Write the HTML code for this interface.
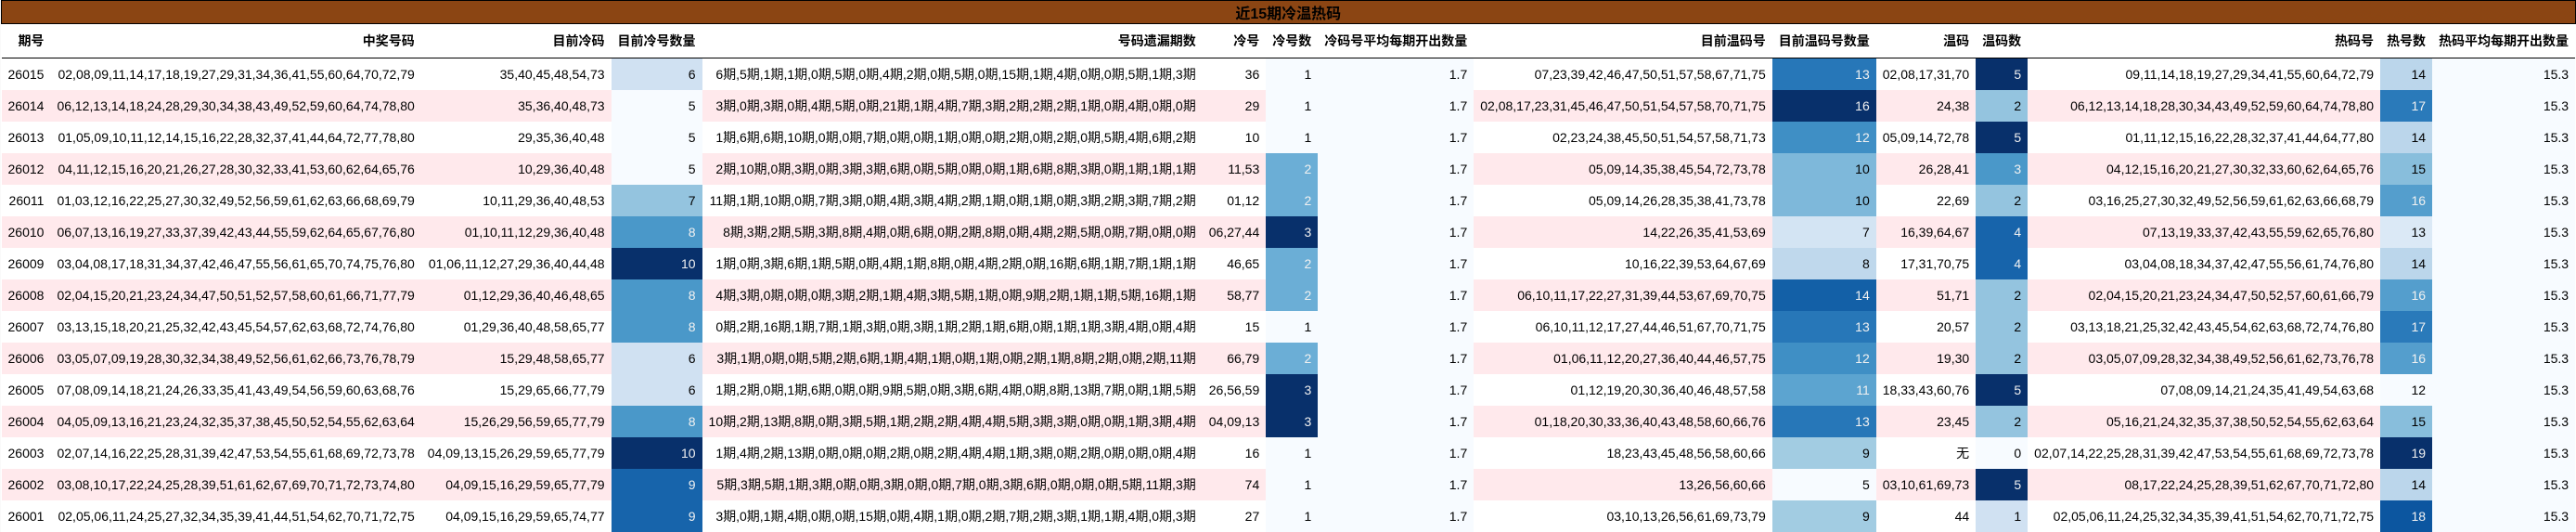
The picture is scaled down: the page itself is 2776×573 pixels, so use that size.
<!DOCTYPE html>
<html><head><meta charset="utf-8"><style>
html,body{margin:0;padding:0;background:#fafafa;width:2776px;height:573px;overflow:hidden}
table{position:absolute;left:1px;top:0;border-collapse:collapse;border-spacing:0;background:#fff;font:14px "Liberation Sans","WenQuanYi Zen Hei","Noto Sans CJK SC",sans-serif;color:#000;white-space:nowrap}
td,th{padding:0 7px;text-align:right;height:34px;box-sizing:border-box;font-weight:400}
th{font-weight:700;height:37px;border-bottom:1px solid #000}
th.t{height:25px;text-align:center;background:#8b4513;font-size:16px;border:1px solid #000;padding:0}
tr.p td{background:#ffe9ec}
tr td.g0{background:#f7fbff}
tr td.k1{background:#d0e1f2}tr td.k2{background:#94c4df}tr td.k3{background:#4a98c9;color:#f1f1f1}tr td.k4{background:#1764ab;color:#f1f1f1}tr td.k5{background:#08306b;color:#f1f1f1}
tr td.m{background:#6baed6;color:#f1f1f1}
tr td.w7{background:#d3e4f3}tr td.w8{background:#bfd8ec}tr td.w9{background:#a2cce2}tr td.w10{background:#7eb8da}tr td.w11{background:#5ca4d0;color:#f1f1f1}tr td.w12{background:#3f8fc5;color:#f1f1f1}tr td.w13{background:#2777b8;color:#f1f1f1}tr td.w14{background:#1360a7;color:#f1f1f1}
tr td.h13{background:#dbe9f6}tr td.h14{background:#bbd6eb}tr td.h15{background:#88bedc}tr td.h16{background:#549ecd;color:#f1f1f1}tr td.h17{background:#2a7aba;color:#f1f1f1}tr td.h18{background:#0c56a0;color:#f1f1f1}
</style></head><body>
<table>
<thead>
<tr><th class="t" colspan="15">近15期冷温热码</th></tr>
<tr><th>期号</th><th>中奖号码</th><th>目前冷码</th><th>目前冷号数量</th><th>号码遗漏期数</th><th>冷号</th><th>冷号数</th><th>冷码号平均每期开出数量</th><th>目前温码号</th><th>目前温码号数量</th><th>温码</th><th>温码数</th><th>热码号</th><th>热号数</th><th>热码平均每期开出数量</th></tr>
</thead>
<tbody>
<tr><td>26015</td><td>02,08,09,11,14,17,18,19,27,29,31,34,36,41,55,60,64,70,72,79</td><td>35,40,45,48,54,73</td><td class="k1">6</td><td>6期,5期,1期,1期,0期,5期,0期,4期,2期,0期,5期,0期,15期,1期,4期,0期,0期,5期,1期,3期</td><td>36</td><td class="g0">1</td><td class="g0">1.7</td><td>07,23,39,42,46,47,50,51,57,58,67,71,75</td><td class="w13">13</td><td>02,08,17,31,70</td><td class="k5">5</td><td>09,11,14,18,19,27,29,34,41,55,60,64,72,79</td><td class="h14">14</td><td class="g0">15.3</td></tr>
<tr class="p"><td>26014</td><td>06,12,13,14,18,24,28,29,30,34,38,43,49,52,59,60,64,74,78,80</td><td>35,36,40,48,73</td><td class="g0">5</td><td>3期,0期,3期,0期,4期,5期,0期,21期,1期,4期,7期,3期,2期,2期,2期,1期,0期,4期,0期,0期</td><td>29</td><td class="g0">1</td><td class="g0">1.7</td><td>02,08,17,23,31,45,46,47,50,51,54,57,58,70,71,75</td><td class="k5">16</td><td>24,38</td><td class="k2">2</td><td>06,12,13,14,18,28,30,34,43,49,52,59,60,64,74,78,80</td><td class="h17">17</td><td class="g0">15.3</td></tr>
<tr><td>26013</td><td>01,05,09,10,11,12,14,15,16,22,28,32,37,41,44,64,72,77,78,80</td><td>29,35,36,40,48</td><td class="g0">5</td><td>1期,6期,6期,10期,0期,0期,7期,0期,0期,1期,0期,0期,2期,0期,2期,0期,5期,4期,6期,2期</td><td>10</td><td class="g0">1</td><td class="g0">1.7</td><td>02,23,24,38,45,50,51,54,57,58,71,73</td><td class="w12">12</td><td>05,09,14,72,78</td><td class="k5">5</td><td>01,11,12,15,16,22,28,32,37,41,44,64,77,80</td><td class="h14">14</td><td class="g0">15.3</td></tr>
<tr class="p"><td>26012</td><td>04,11,12,15,16,20,21,26,27,28,30,32,33,41,53,60,62,64,65,76</td><td>10,29,36,40,48</td><td class="g0">5</td><td>2期,10期,0期,3期,0期,3期,3期,6期,0期,5期,0期,0期,1期,6期,8期,3期,0期,1期,1期,1期</td><td>11,53</td><td class="m">2</td><td class="g0">1.7</td><td>05,09,14,35,38,45,54,72,73,78</td><td class="w10">10</td><td>26,28,41</td><td class="k3">3</td><td>04,12,15,16,20,21,27,30,32,33,60,62,64,65,76</td><td class="h15">15</td><td class="g0">15.3</td></tr>
<tr><td>26011</td><td>01,03,12,16,22,25,27,30,32,49,52,56,59,61,62,63,66,68,69,79</td><td>10,11,29,36,40,48,53</td><td class="k2">7</td><td>11期,1期,10期,0期,7期,3期,0期,4期,3期,4期,2期,1期,0期,1期,0期,3期,2期,3期,7期,2期</td><td>01,12</td><td class="m">2</td><td class="g0">1.7</td><td>05,09,14,26,28,35,38,41,73,78</td><td class="w10">10</td><td>22,69</td><td class="k2">2</td><td>03,16,25,27,30,32,49,52,56,59,61,62,63,66,68,79</td><td class="h16">16</td><td class="g0">15.3</td></tr>
<tr class="p"><td>26010</td><td>06,07,13,16,19,27,33,37,39,42,43,44,55,59,62,64,65,67,76,80</td><td>01,10,11,12,29,36,40,48</td><td class="k3">8</td><td>8期,3期,2期,5期,3期,8期,4期,0期,6期,0期,2期,8期,0期,4期,2期,5期,0期,7期,0期,0期</td><td>06,27,44</td><td class="k5">3</td><td class="g0">1.7</td><td>14,22,26,35,41,53,69</td><td class="w7">7</td><td>16,39,64,67</td><td class="k4">4</td><td>07,13,19,33,37,42,43,55,59,62,65,76,80</td><td class="h13">13</td><td class="g0">15.3</td></tr>
<tr><td>26009</td><td>03,04,08,17,18,31,34,37,42,46,47,55,56,61,65,70,74,75,76,80</td><td>01,06,11,12,27,29,36,40,44,48</td><td class="k5">10</td><td>1期,0期,3期,6期,1期,5期,0期,4期,1期,8期,0期,4期,2期,0期,16期,6期,1期,7期,1期,1期</td><td>46,65</td><td class="m">2</td><td class="g0">1.7</td><td>10,16,22,39,53,64,67,69</td><td class="w8">8</td><td>17,31,70,75</td><td class="k4">4</td><td>03,04,08,18,34,37,42,47,55,56,61,74,76,80</td><td class="h14">14</td><td class="g0">15.3</td></tr>
<tr class="p"><td>26008</td><td>02,04,15,20,21,23,24,34,47,50,51,52,57,58,60,61,66,71,77,79</td><td>01,12,29,36,40,46,48,65</td><td class="k3">8</td><td>4期,3期,0期,0期,0期,3期,2期,1期,4期,3期,5期,1期,0期,9期,2期,1期,1期,5期,16期,1期</td><td>58,77</td><td class="m">2</td><td class="g0">1.7</td><td>06,10,11,17,22,27,31,39,44,53,67,69,70,75</td><td class="w14">14</td><td>51,71</td><td class="k2">2</td><td>02,04,15,20,21,23,24,34,47,50,52,57,60,61,66,79</td><td class="h16">16</td><td class="g0">15.3</td></tr>
<tr><td>26007</td><td>03,13,15,18,20,21,25,32,42,43,45,54,57,62,63,68,72,74,76,80</td><td>01,29,36,40,48,58,65,77</td><td class="k3">8</td><td>0期,2期,16期,1期,7期,1期,3期,0期,3期,1期,2期,1期,6期,0期,1期,1期,3期,4期,0期,4期</td><td>15</td><td class="g0">1</td><td class="g0">1.7</td><td>06,10,11,12,17,27,44,46,51,67,70,71,75</td><td class="w13">13</td><td>20,57</td><td class="k2">2</td><td>03,13,18,21,25,32,42,43,45,54,62,63,68,72,74,76,80</td><td class="h17">17</td><td class="g0">15.3</td></tr>
<tr class="p"><td>26006</td><td>03,05,07,09,19,28,30,32,34,38,49,52,56,61,62,66,73,76,78,79</td><td>15,29,48,58,65,77</td><td class="k1">6</td><td>3期,1期,0期,0期,5期,2期,6期,1期,4期,1期,0期,1期,0期,2期,1期,8期,2期,0期,2期,11期</td><td>66,79</td><td class="m">2</td><td class="g0">1.7</td><td>01,06,11,12,20,27,36,40,44,46,57,75</td><td class="w12">12</td><td>19,30</td><td class="k2">2</td><td>03,05,07,09,28,32,34,38,49,52,56,61,62,73,76,78</td><td class="h16">16</td><td class="g0">15.3</td></tr>
<tr><td>26005</td><td>07,08,09,14,18,21,24,26,33,35,41,43,49,54,56,59,60,63,68,76</td><td>15,29,65,66,77,79</td><td class="k1">6</td><td>1期,2期,0期,1期,6期,0期,0期,9期,5期,0期,3期,6期,4期,0期,8期,13期,7期,0期,1期,5期</td><td>26,56,59</td><td class="k5">3</td><td class="g0">1.7</td><td>01,12,19,20,30,36,40,46,48,57,58</td><td class="w11">11</td><td>18,33,43,60,76</td><td class="k5">5</td><td>07,08,09,14,21,24,35,41,49,54,63,68</td><td class="g0">12</td><td class="g0">15.3</td></tr>
<tr class="p"><td>26004</td><td>04,05,09,13,16,21,23,24,32,35,37,38,45,50,52,54,55,62,63,64</td><td>15,26,29,56,59,65,77,79</td><td class="k3">8</td><td>10期,2期,13期,8期,0期,3期,5期,1期,2期,2期,4期,4期,5期,3期,3期,0期,0期,1期,3期,4期</td><td>04,09,13</td><td class="k5">3</td><td class="g0">1.7</td><td>01,18,20,30,33,36,40,43,48,58,60,66,76</td><td class="w13">13</td><td>23,45</td><td class="k2">2</td><td>05,16,21,24,32,35,37,38,50,52,54,55,62,63,64</td><td class="h15">15</td><td class="g0">15.3</td></tr>
<tr><td>26003</td><td>02,07,14,16,22,25,28,31,39,42,47,53,54,55,61,68,69,72,73,78</td><td>04,09,13,15,26,29,59,65,77,79</td><td class="k5">10</td><td>1期,4期,2期,13期,0期,0期,0期,2期,0期,2期,4期,4期,1期,3期,0期,2期,0期,0期,0期,4期</td><td>16</td><td class="g0">1</td><td class="g0">1.7</td><td>18,23,43,45,48,56,58,60,66</td><td class="w9">9</td><td>无</td><td class="g0">0</td><td>02,07,14,22,25,28,31,39,42,47,53,54,55,61,68,69,72,73,78</td><td class="k5">19</td><td class="g0">15.3</td></tr>
<tr class="p"><td>26002</td><td>03,08,10,17,22,24,25,28,39,51,61,62,67,69,70,71,72,73,74,80</td><td>04,09,15,16,29,59,65,77,79</td><td class="k4">9</td><td>5期,3期,5期,1期,3期,0期,0期,3期,0期,0期,7期,0期,3期,6期,0期,0期,0期,5期,11期,3期</td><td>74</td><td class="g0">1</td><td class="g0">1.7</td><td>13,26,56,60,66</td><td class="g0">5</td><td>03,10,61,69,73</td><td class="k5">5</td><td>08,17,22,24,25,28,39,51,62,67,70,71,72,80</td><td class="h14">14</td><td class="g0">15.3</td></tr>
<tr><td>26001</td><td>02,05,06,11,24,25,27,32,34,35,39,41,44,51,54,62,70,71,72,75</td><td>04,09,15,16,29,59,65,74,77</td><td class="k4">9</td><td>3期,0期,1期,4期,0期,0期,15期,0期,4期,1期,0期,2期,7期,2期,3期,1期,1期,4期,0期,3期</td><td>27</td><td class="g0">1</td><td class="g0">1.7</td><td>03,10,13,26,56,61,69,73,79</td><td class="w9">9</td><td>44</td><td class="k1">1</td><td>02,05,06,11,24,25,32,34,35,39,41,51,54,62,70,71,72,75</td><td class="h18">18</td><td class="g0">15.3</td></tr>
</tbody>
</table>
</body></html>
